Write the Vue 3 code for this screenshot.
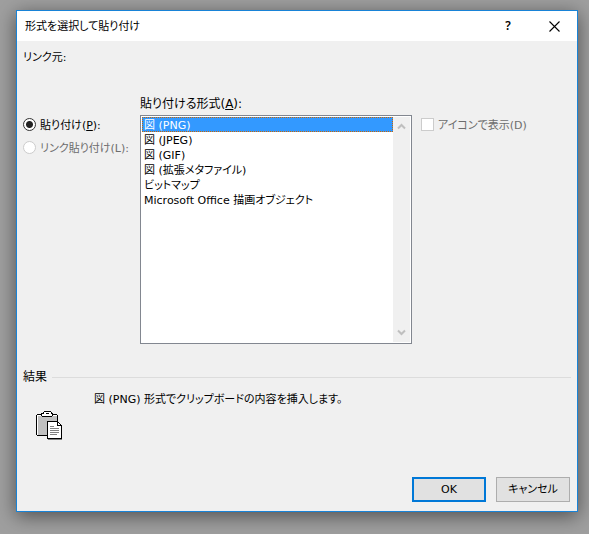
<script setup>
import { ref, computed } from 'vue'

const formats = [
  '図 (PNG)',
  '図 (JPEG)',
  '図 (GIF)',
  '図 (拡張メタファイル)',
  'ビットマップ',
  'Microsoft Office 描画オブジェクト',
]
const selected = ref(formats[0])
const mode = ref('paste')
const asIcon = ref(false)
const description = computed(() => `${selected.value} 形式でクリップボードの内容を挿入します。`)
</script>

<template>
  <main class="desktop">
    <form class="dialog" role="dialog" aria-labelledby="dialog-title" @submit.prevent>
      <header class="titlebar">
        <h1 id="dialog-title" class="title">形式を選択して貼り付け</h1>
        <button type="button" class="caption-button help">?</button>
        <button type="button" class="caption-button" aria-label="閉じる">
          <svg width="11" height="11" viewBox="0 0 11 11">
            <path d="M0.5 0.5 L10.5 10.5 M10.5 0.5 L0.5 10.5" stroke="#000" stroke-width="1.1" fill="none" />
          </svg>
        </button>
      </header>

      <div class="content">
        <p class="source">リンク元:</p>

        <div class="options">
          <div class="modes">
            <label class="choice">
              <input v-model="mode" type="radio" name="mode" value="paste" class="radio" />
              <span class="choice-text">貼り付け(<u>P</u>):</span>
            </label>
            <label class="choice disabled">
              <input v-model="mode" type="radio" name="mode" value="link" class="radio" disabled />
              <span class="choice-text">リンク貼り付け(L):</span>
            </label>
          </div>

          <div class="formats">
            <label for="format-list" class="list-label">貼り付ける形式(<u>A</u>):</label>
            <div class="list-frame">
              <select id="format-list" v-model="selected" size="15" class="list">
                <option v-for="format in formats" :key="format" :value="format">{{ format }}</option>
              </select>
              <div class="scrollbar" aria-hidden="true">
                <svg width="9" height="7" viewBox="0 0 9 7">
                  <path d="M1 5.5 L4.5 2 L8 5.5" />
                </svg>
                <svg width="9" height="7" viewBox="0 0 9 7">
                  <path d="M1 1.5 L4.5 5 L8 1.5" />
                </svg>
              </div>
            </div>
          </div>

          <div class="display">
            <label class="choice disabled">
              <input v-model="asIcon" type="checkbox" class="checkbox" disabled />
              <span class="choice-text">アイコンで表示(D)</span>
            </label>
          </div>
        </div>

        <section class="result">
          <h2 class="result-title">結果</h2>
          <div class="result-body">
            <svg class="clipboard" width="27" height="29" viewBox="0 0 27 29" shape-rendering="crispEdges" aria-hidden="true">
              <path d="M1 3H21V25H1Z" fill="#000" />
              <path d="M0 4H22V24H0Z" fill="#000" />
              <path d="M1 4H21V24H1Z" fill="#fff" />
              <path d="M2 5H21V24H2Z" fill="#c0c0c0" />
              <path d="M7 1H8V0H15V1H16V2H17V5H16V6H6V5H5V2H7Z" fill="#000" />
              <path d="M8 1H15V3H16V5H6V3H8Z" fill="#fff" />
              <path d="M10 2H13V3H10Z" fill="#000" />
              <path d="M11 10H22V11H23V12H24V13H25V14H26V28H11Z" fill="#000" />
              <path d="M12 11H21V15H25V27H12Z" fill="#fff" />
              <path d="M22 12H23V13H24V14H22Z" fill="#fff" />
              <path d="M12 28H26V29H12Z" fill="#808080" />
              <path d="M14 15H18V16H14ZM14 17H23V18H14ZM14 19H23V20H14ZM14 21H23V22H14ZM14 23H21V24H14Z" fill="#808080" />
            </svg>
            <p class="description">{{ description }}</p>
          </div>
        </section>

        <footer class="actions">
          <button type="submit" class="button primary">OK</button>
          <button type="button" class="button">キャンセル</button>
        </footer>
      </div>
    </form>
  </main>
</template>

<style>
body {
  background: #9f9f9f;
}
</style>

<style scoped>
* {
  box-sizing: border-box;
}

.desktop {
  padding: 10px 11px 22px 16px;
  font-family: "DejaVu Sans", "Noto Sans CJK JP", sans-serif;
  font-size: 11px;
  line-height: 20px;
  font-feature-settings: "palt";
  color: #000;
}

button,
select,
option {
  font: inherit;
  font-feature-settings: inherit;
}

h1,
h2,
p {
  margin: 0;
  font-size: 11px;
  font-weight: 400;
}

.dialog {
  background: #f0f0f0;
  border: 1px solid #1883d7;
  box-shadow: 0 4px 18px rgba(0, 0, 0, 0.5);
}

.titlebar {
  display: flex;
  align-items: center;
  height: 30px;
  padding-left: 8px;
  background: #fff;
}

.title {
  flex: 1;
  padding-top: 2px;
}

.caption-button {
  display: flex;
  align-items: center;
  justify-content: center;
  width: 46px;
  height: 30px;
  padding: 0;
  border: 0;
  background: transparent;
  color: #000;
}

.help {
  font-family: "Noto Sans", sans-serif;
  font-size: 12px;
  font-weight: 600;
}

.content {
  padding: 7px 6px 9px;
}

.source {
  margin-bottom: 26px;
}

.options {
  display: grid;
  grid-template-columns: 117px 1fr 159px;
}

.modes,
.display {
  padding-top: 19px;
}

.display {
  padding-left: 9px;
}

.choice {
  display: flex;
  align-items: center;
  gap: 4px;
  height: 23px;
  white-space: nowrap;
}

.choice-text {
  padding-top: 2px;
}

.disabled {
  color: #6d6d6d;
}

.radio,
.checkbox {
  appearance: none;
  flex: none;
  width: 13px;
  height: 13px;
  margin: 0;
  border: 1px solid #333;
  background: #fff;
}

.radio {
  border-radius: 50%;
}

.radio:checked {
  background: radial-gradient(circle, #222 0 3px, #fff 4px);
}

.radio:disabled,
.checkbox:disabled {
  border-color: #ccc;
}

.list-label {
  display: block;
  height: 21px;
  font-size: 12px;
}

.list-frame {
  display: flex;
  height: 229px;
  padding: 1px;
  border: 1px solid #828790;
  background: #fff;
}

.list {
  flex: 1;
  min-width: 0;
  padding: 0;
  border: 0;
  border-radius: 0;
  outline: 0;
  overflow: hidden;
  background: #fff;
  color: #000;
}

.list option {
  display: flex;
  align-items: center;
  height: 15px;
  min-height: 15px;
  padding: 0 1px 1px;
  border: 1px dotted transparent;
  line-height: 15px;
}

.list option:checked {
  border-color: #cc6600;
  background: linear-gradient(#39f, #39f);
  -webkit-text-fill-color: #fff;
}

.scrollbar {
  display: flex;
  flex-direction: column;
  align-items: center;
  justify-content: space-between;
  width: 17px;
  padding: 6px 0;
  background: #f0f0f0;
}

.scrollbar path {
  fill: none;
  stroke: #bfbfbf;
  stroke-width: 2;
}

.result {
  margin-top: 23px;
}

.result-title {
  display: flex;
  align-items: center;
  gap: 5px;
  font-size: 12px;
}

.result-title::after {
  content: "";
  flex: 1;
  height: 1px;
  background: #dcdcdc;
}

.result-body {
  display: flex;
  align-items: flex-start;
  gap: 31px;
  padding: 3px 0 0 13px;
}

.clipboard {
  flex: none;
  margin-top: 21px;
}

.actions {
  display: flex;
  justify-content: flex-end;
  gap: 10px;
  margin-top: 37px;
  padding-right: 1px;
}

.button {
  width: 74px;
  height: 25px;
  padding: 0;
  border: 1px solid #adadad;
  background: #e1e1e1;
  color: #000;
}

.primary {
  border: 2px solid #0078d7;
}
</style>
